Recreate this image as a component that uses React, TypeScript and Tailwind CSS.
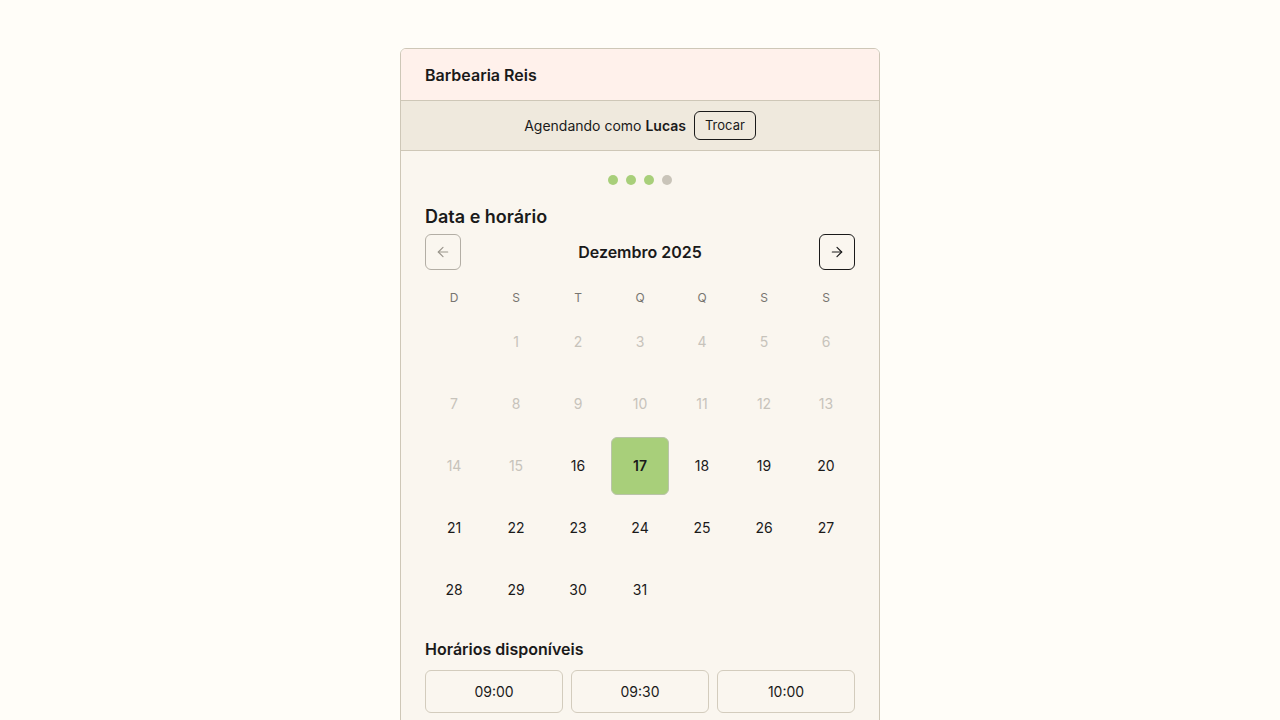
import React from 'react';
import { ArrowLeft, ArrowRight } from 'lucide-react';

const weekdays = ['D', 'S', 'T', 'Q', 'Q', 'S', 'S'];
const slots = ['09:00', '09:30', '10:00'];

export default function App() {
  // dezembro 2025 começa numa segunda
  const cells: (number | null)[] = [null, ...Array.from({ length: 31 }, (_, i) => i + 1)];
  const today = 16;
  const selected = 17;

  return (
    <div className="min-h-screen bg-[#fffdf8] pt-12 font-['Inter',sans-serif] text-[#1a1a1a]">
      <div className="mx-auto w-[480px] rounded-t-md border border-[#cec7b7] overflow-hidden">
        {/* Header */}
        <header className="bg-[#fff1eb] px-6 pt-[14px] pb-[13px] border-b border-[#cec7b7]">
          <h1 className="text-base font-semibold leading-6">Barbearia Reis</h1>
        </header>

        {/* Usuário */}
        <div className="bg-[#efe9dd] border-b border-[#cec7b7] flex items-center justify-center gap-2 py-[10px] text-sm">
          <span>
            Agendando como <b className="font-semibold">Lucas</b>
          </span>
          <button className="h-[29px] px-2.5 rounded-md border border-[#1a1a1a] text-[13px] bg-transparent">Trocar</button>
        </div>

        {/* Conteúdo */}
        <div className="bg-[#faf6ef] px-6 pt-6 pb-10">
          <div className="flex justify-center gap-2">
            <span className="w-2.5 h-2.5 rounded-full bg-[#a8cf7a]" />
            <span className="w-2.5 h-2.5 rounded-full bg-[#a8cf7a]" />
            <span className="w-2.5 h-2.5 rounded-full bg-[#a8cf7a]" />
            <span className="w-2.5 h-2.5 rounded-full bg-[#c9c4b9]" />
          </div>

          <h2 className="mt-[18px] text-lg font-semibold leading-7">Data e horário</h2>

          <div className="mt-[3px] flex items-center justify-between">
            <button className="w-9 h-9 rounded-md border border-[#b3aea5] flex items-center justify-center text-[#9a958c]">
              <ArrowLeft className="w-4 h-4" strokeWidth={1.75} />
            </button>
            <span className="text-base font-semibold">Dezembro 2025</span>
            <button className="w-9 h-9 rounded-md border border-[#1a1a1a] flex items-center justify-center text-[#1a1a1a]">
              <ArrowRight className="w-4 h-4" strokeWidth={1.75} />
            </button>
          </div>

          <div className="mt-5 grid grid-cols-7 gap-x-1 text-xs text-[#777570] leading-4">
            {weekdays.map((d, i) => (
              <div key={i} className="text-center">{d}</div>
            ))}
          </div>

          <div className="mt-[7px] grid grid-cols-7 gap-1">
            {cells.map((n, i) => {
              if (n === null) return <div key={i} className="h-[58px]" />;
              const disabled = n < today;
              const isSel = n === selected;
              return (
                <div
                  key={i}
                  className={
                    isSel
                      ? 'h-[58px] rounded-md bg-[#a8cf7a] border border-[#b9c4a8] flex items-center justify-center text-sm font-semibold'
                      : disabled
                      ? 'h-[58px] flex items-center justify-center text-sm text-[#c7c3bb]'
                      : 'h-[58px] flex items-center justify-center text-sm text-[#1a1a1a]'
                  }
                >
                  {n}
                </div>
              );
            })}
          </div>

          <h3 className="mt-[18px] text-base font-semibold leading-6">Horários disponíveis</h3>

          <div className="mt-[9px] grid grid-cols-3 gap-2">
            {slots.map((s) => (
              <button key={s} className="h-[43px] rounded-md border border-[#d3ccbd] text-sm bg-transparent">
                {s}
              </button>
            ))}
          </div>
        </div>
      </div>
    </div>
  );
}
